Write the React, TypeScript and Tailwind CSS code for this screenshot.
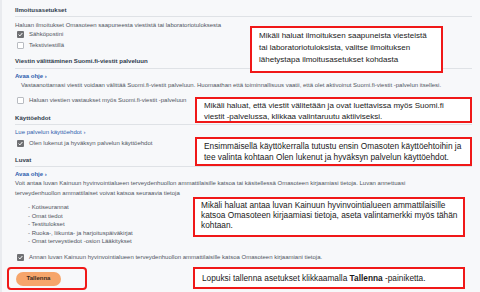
import React from 'react'

const FONT = { fontFamily: '"Liberation Sans", Arial, sans-serif' }

function Box({ checked }: { checked?: boolean }) {
  if (checked) {
    return (
      <svg width="7" height="7" viewBox="0 0 7 7" className="shrink-0">
        <rect x="0" y="0" width="7" height="7" rx="1" fill="#6f7073" />
        <path d="M1.6 3.6 L2.9 4.9 L5.4 2" stroke="#fff" strokeWidth="1" fill="none" />
      </svg>
    )
  }
  return <span className="h-[7px] w-[7px] shrink-0 rounded-[1px] border border-[#b9bcc2] bg-white" />
}

function Heading({ children, pb }: { children: React.ReactNode; pb: string }) {
  return (
    <div className={`border-b border-[#dfe2e6] text-[6.1px] font-bold leading-[8px] text-[#2f3b4c] ${pb}`}>
      {children}
    </div>
  )
}

function CheckRow({ checked, label, className }: { checked?: boolean; label: string; className: string }) {
  return (
    <div className={`flex h-[10px] items-center gap-[5px] pl-[2px] ${className}`}>
      <Box checked={checked} />
      <span>{label}</span>
    </div>
  )
}

function Callout({ className, children }: { className: string; children: React.ReactNode }) {
  return (
    <div className={`absolute whitespace-nowrap border-2 border-[#f01818] bg-white text-[#1a1a1a] ${className}`}>
      {children}
    </div>
  )
}

const lista = [
  '- Kotiseurannat',
  '- Omat tiedot',
  '- Testitulokset',
  '- Ruoka-, liikunta- ja harjoituspäiväkirjat',
  '- Omat terveystiedot -osion Lääkitykset',
]

export default function App() {
  return (
    <div
      className="relative h-[292px] w-[480px] overflow-hidden border-l-2 border-[#e9ebef] bg-[#f7f8fa]"
      style={FONT}
    >
      <div className="pl-[13px] pr-[8px] pt-[6px] text-[6px] text-[#50565f]">
        <Heading pb="pb-[2px]">Ilmoitusasetukset</Heading>
        <div className="mt-[4px] leading-[8px]">
          Haluan ilmoitukset Omasoteen saapuneesta viestistä tai laboratoriotuloksesta
        </div>
        <CheckRow checked label="Sähköpostini" className="mt-0" />
        <CheckRow label="Tekstiviestillä" className="mt-[1px]" />

        <div className="mt-[7px]">
          <Heading pb="pb-[3px]">Viestin välittäminen Suomi.fi-viestit palveluun</Heading>
        </div>
        <div className="mt-[3px] leading-[8px] font-semibold text-[#2f5fae]">Avaa ohje ›</div>
        <div className="mt-[1px] pl-[6px] leading-[8px]">
          Vastaanottamasi viestit voidaan välittää Suomi.fi-viestit palveluun. Huomaathan että toiminnallisuus vaatii, että olet aktivoinut Suomi.fi-viestit -palvelun itsellesi.
        </div>
        <div className="mt-[6px]">
          <div className="flex h-[10px] items-center gap-[5px] pl-[2px]">
            <Box />
            <span>Haluan viestien vastaukset myös Suomi.fi-viestit -palveluun</span>
          </div>
        </div>

        <div className="mt-[9px]">
          <Heading pb="pb-[2px]">Käyttöehdot</Heading>
        </div>
        <div className="mt-[3px] leading-[8px] text-[#2f5fae]">Lue palvelun käyttöehdot ›</div>
        <CheckRow checked label="Olen lukenut ja hyväksyn palvelun käyttöehdot" className="mt-[2px]" />

        <div className="mt-[8px]">
          <Heading pb="pb-[2px]">Luvat</Heading>
        </div>
        <div className="mt-[3px] leading-[8px] font-semibold text-[#2f5fae]">Avaa ohje ›</div>
        <div className="w-[430px] leading-[10px]">
          Voit antaa luvan Kainuun hyvinvointialueen terveydenhuollon ammattilaisille katsoa tai käsitellessä Omasoteen kirjaamiasi tietoja. Luvan annettuasi terveydenhuollon ammattilaiset voivat katsoa seuraavia tietoja
        </div>
        <ul className="mt-[5px] pl-[13px] leading-[8.5px]">
          {lista.map((l) => (
            <li key={l}>{l}</li>
          ))}
        </ul>
        <CheckRow
          checked
          label="Annan luvan Kainuun hyvinvointialueen terveydenhuollon ammattilaisille katsoa Omasoteen kirjaamiani tietoja."
          className="mt-[7px]"
        />
        <button className="mt-[9px] ml-[1px] flex h-[14px] w-[45px] items-center justify-center rounded-full bg-[#f6a56b] text-[6px] font-bold text-[#3a2a1e]">
          Tallenna
        </button>
      </div>

      <div className="absolute left-[5px] top-[267px] h-[23px] w-[80px] rounded-[4px] border-2 border-[#f01818]" />

      <Callout className="left-[248px] top-[26px] h-[47px] w-[193px] pl-[7px] pt-[2px] text-[8px] leading-[12px]">
        <div>Mikäli haluat ilmoituksen saapuneista viesteistä</div>
        <div>tai laboratoriotuloksista, valitse ilmoituksen</div>
        <div>lähetystapa ilmoitusasetukset kohdasta</div>
      </Callout>
      <Callout className="left-[193px] top-[97px] h-[26px] w-[277px] pl-[7px] pt-[1px] text-[8px] leading-[11px]">
        <div>Mikäli haluat, että viestit välitetään ja ovat luettavissa myös Suomi.fi</div>
        <div>viestit -palvelussa, klikkaa valintaruutu aktiiviseksi.</div>
      </Callout>
      <Callout className="left-[193px] top-[137px] h-[29px] w-[277px] pl-[7px] pt-[2px] text-[8.3px] leading-[11px]">
        <div>Ensimmäisellä käyttökerralla tutustu ensin Omasoten käyttöehtoihin ja</div>
        <div>tee valinta kohtaan Olen lukenut ja hyväksyn palvelun käyttöehdot.</div>
      </Callout>
      <Callout className="left-[191px] top-[197px] h-[40px] w-[272px] pl-[6px] pt-[1px] text-[8.3px] leading-[10px]">
        <div>Mikäli haluat antaa luvan Kainuun hyvinvointialueen ammattilaisille</div>
        <div>katsoa Omasoteen kirjaamiasi tietoja, aseta valintamerkki myös tähän</div>
        <div>kohtaan.</div>
      </Callout>
      <Callout className="left-[191px] top-[267px] h-[22px] w-[272px] pl-[7px] text-[8.3px] leading-[18px]">
        Lopuksi tallenna asetukset klikkaamalla <b>Tallenna</b> -painiketta.
      </Callout>
    </div>
  )
}
